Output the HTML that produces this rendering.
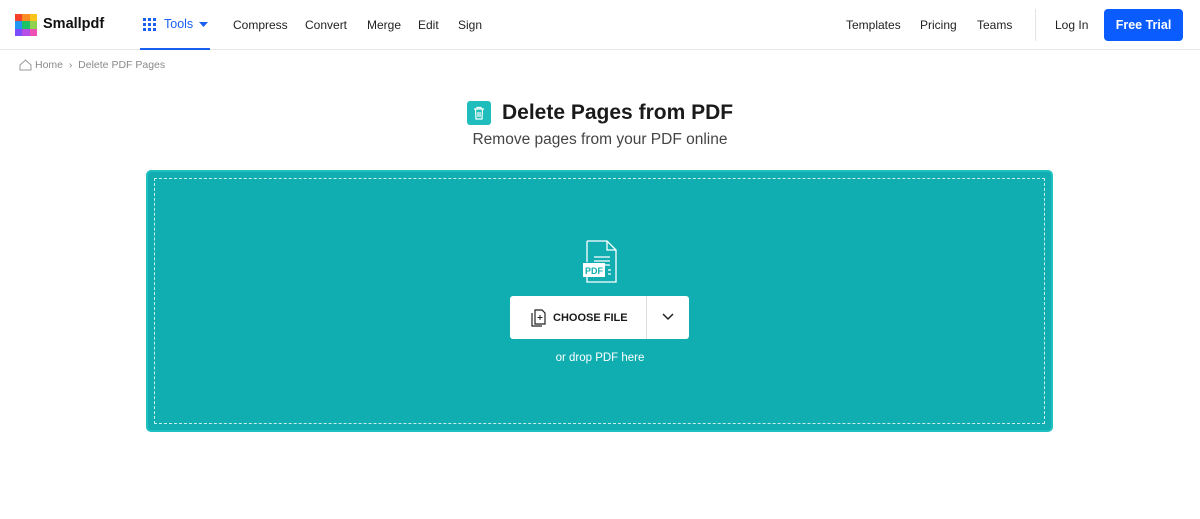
<!DOCTYPE html>
<html><head><style>
*{box-sizing:border-box;margin:0;padding:0}
body{width:1200px;height:519px;background:#fff;font-family:"Liberation Sans",sans-serif;color:#222;position:relative;overflow:hidden}
.nav{position:absolute;top:0;left:0;width:1200px;height:50px;border-bottom:1px solid #e6e6e6}
.a{position:absolute;top:18px;font-size:12px;color:#222}
.logo{position:absolute;left:15px;top:14px;width:22px;height:22px;display:grid;grid-template-columns:repeat(3,1fr)}
</style></head><body>
<div class="nav">
 <div class="logo">
  <i style="background:#f5412a"></i><i style="background:#fb8b24"></i><i style="background:#fcc419"></i>
  <i style="background:#2196f3"></i><i style="background:#1ec266"></i><i style="background:#8fd14f"></i>
  <i style="background:#7b4dff"></i><i style="background:#b44ee6"></i><i style="background:#ee4fb5"></i>
 </div>
 <div class="a" style="left:43px;top:16px;font-weight:bold;font-size:14.5px;color:#111">Smallpdf</div>
 <svg style="position:absolute;left:143px;top:18px" width="13" height="13"><g fill="#1a5ff0"><rect x="0" y="0" width="3" height="3"/><rect x="5" y="0" width="3" height="3"/><rect x="10" y="0" width="3" height="3"/><rect x="0" y="5" width="3" height="3"/><rect x="5" y="5" width="3" height="3"/><rect x="10" y="5" width="3" height="3"/><rect x="0" y="10" width="3" height="3"/><rect x="5" y="10" width="3" height="3"/><rect x="10" y="10" width="3" height="3"/></g></svg>
 <div class="a" style="left:164px;color:#1a5ff0;font-size:12.5px;top:17px">Tools</div>
 <svg style="position:absolute;left:199px;top:22px" width="9" height="5"><path d="M0 0h9L4.5 5z" fill="#1a5ff0"/></svg>
 <div style="position:absolute;left:140px;top:48px;width:70px;height:2px;background:#1a5ff0"></div>
 <div class="a" style="left:233px">Compress</div>
 <div class="a" style="left:305px">Convert</div>
 <div class="a" style="left:367px">Merge</div>
 <div class="a" style="left:418px">Edit</div>
 <div class="a" style="left:458px">Sign</div>
 <div class="a" style="left:846px">Templates</div>
 <div class="a" style="left:920px">Pricing</div>
 <div class="a" style="left:977px">Teams</div>
 <div style="position:absolute;left:1035px;top:9px;width:1px;height:32px;background:#e3e3e3"></div>
 <div class="a" style="left:1055px">Log In</div>
 <div style="position:absolute;left:1104px;top:9px;width:79px;height:32px;background:#0b5cff;border-radius:4px;color:#fff;font-weight:bold;font-size:12.5px;text-align:center;line-height:32px">Free Trial</div>
</div>
<svg style="position:absolute;left:19px;top:59px" width="13" height="12"><path d="M1 6L6.5 1 12 6V11H1z" fill="none" stroke="#999" stroke-width="1"/></svg>
<div style="position:absolute;left:35px;top:59px;font-size:10.5px;color:#8a8a8a">Home &nbsp;›&nbsp; Delete PDF Pages</div>
<div style="position:absolute;left:467px;top:101px;width:24px;height:24px;background:#1fbdbb;border-radius:3px"></div>
<svg style="position:absolute;left:473px;top:106px" width="12" height="14"><path d="M1 3h10M4 3V1.5h4V3M2.5 3l.5 10h6l.5-10M5 6v5M7 6v5" fill="none" stroke="#fff" stroke-width="1.2"/></svg>
<div style="position:absolute;left:502px;top:101px;font-size:21px;font-weight:bold;color:#1a1a1a">Delete Pages from PDF</div>
<div style="position:absolute;left:0;width:1200px;top:131px;text-align:center;font-size:15.5px;color:#444">Remove pages from your PDF online</div>
<div style="position:absolute;left:146px;top:170px;width:907px;height:262px;background:#10aeb1;border:2px solid #1ec1bf;border-radius:5px"></div>
<div style="position:absolute;left:154px;top:178px;width:891px;height:246px;border:1px dashed #c8eeee"></div>
<svg style="position:absolute;left:582px;top:240px" width="36" height="43"><path d="M5 1H25L34 10V42H5V30M5 22V1" fill="none" stroke="#fff" stroke-width="1.3"/><path d="M25 1V10H34" fill="none" stroke="#fff" stroke-width="1.3"/><path d="M12 17H28M12 21H28M12 25H28M26 30H29M26 34H29" stroke="#fff" stroke-width="1.3"/><rect x="1" y="23" width="22" height="14" fill="#fff"/><text x="12" y="34" font-size="9" font-weight="bold" fill="#10aeb1" text-anchor="middle" font-family="Liberation Sans">PDF</text></svg>
<div style="position:absolute;left:510px;top:296px;width:179px;height:43px;background:#fff;border-radius:3px"></div>
<div style="position:absolute;left:646px;top:296px;width:1px;height:43px;background:#ddd"></div>
<svg style="position:absolute;left:531px;top:309px" width="15" height="18"><path d="M4 1h7l3 3v11H4zM1 4v13h10" fill="none" stroke="#222" stroke-width="1.2"/><path d="M9 6v5M6.5 8.5h5" stroke="#222" stroke-width="1"/></svg>
<div style="position:absolute;left:553px;top:312px;font-size:11px;font-weight:bold;color:#1a1a1a">CHOOSE FILE</div>
<svg style="position:absolute;left:662px;top:313px" width="12" height="8"><path d="M1 1l5 5 5-5" fill="none" stroke="#222" stroke-width="1.5"/></svg>
<div style="position:absolute;left:0;width:1200px;top:352px;text-align:center;font-size:11.5px;color:#fff">or drop PDF here</div>
</body></html>
